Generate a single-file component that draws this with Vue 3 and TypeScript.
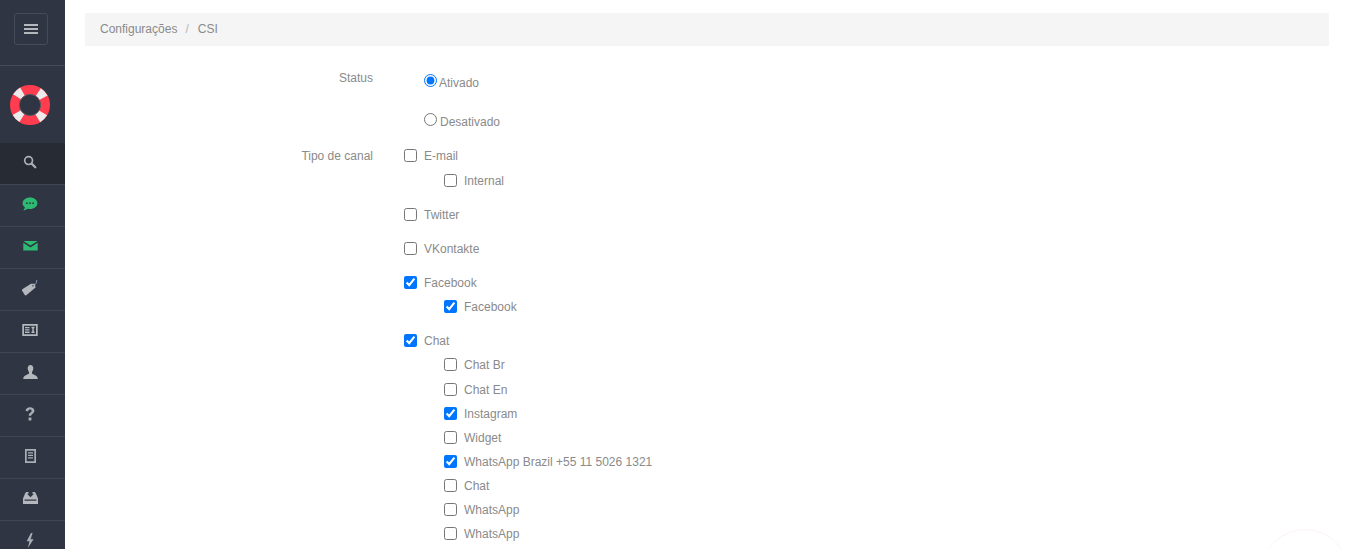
<script setup lang="ts">
interface Row { label: string; checked?: boolean; children?: { label: string; checked?: boolean }[] }
const rows: Row[] = [
  { label: 'E-mail', children: [{ label: 'Internal' }] },
  { label: 'Twitter' },
  { label: 'VKontakte' },
  { label: 'Facebook', checked: true, children: [{ label: 'Facebook', checked: true }] },
  { label: 'Chat', checked: true, children: [
    { label: 'Chat Br' }, { label: 'Chat En' }, { label: 'Instagram', checked: true }, { label: 'Widget' },
    { label: 'WhatsApp Brazil +55 11 5026 1321', checked: true }, { label: 'Chat' }, { label: 'WhatsApp' }, { label: 'WhatsApp' },
  ] },
]
</script>

<template>
  <div class="page">
    <aside class="side">
      <div class="top">
        <button class="toggle" type="button"><span></span><span></span><span></span></button>
      </div>
      <div class="logo">
        <svg width="40" height="40" viewBox="0 0 40 40">
          <circle cx="20" cy="20" r="15.3" fill="none" stroke="#ff3d4f" stroke-width="9.4" />
          <circle cx="20" cy="20" r="15.3" fill="none" stroke="#eceaea" stroke-width="9.4" stroke-dasharray="7.5 16.53" stroke-dashoffset="-8.27" />
          <circle cx="20" cy="20" r="10.6" fill="none" stroke="#5a5560" stroke-width="1" />
        </svg>
      </div>
      <nav class="nav">
        <a class="item active">
          <svg width="14" height="14" viewBox="0 0 14 14"><circle cx="5.6" cy="5.6" r="3.9" fill="none" stroke="#a9b0b8" stroke-width="1.7"/><path d="M8.6 8.6 L12.3 12.3" stroke="#a9b0b8" stroke-width="2.2" stroke-linecap="round"/></svg>
        </a>
        <a class="item">
          <svg width="16" height="14" viewBox="0 0 16 14"><path d="M8 .5C3.8.5.6 3 .6 6.200c0 1.700.9 3.100 2.300 4.100-.2 1.300-1 2.300-1.700 3 1.900 0 3.400-.7 4.400-1.500.7.1 1.500.2 2.400.2 4.200 0 7.400-2.600 7.400-5.800S12.200.5 8 .5z" fill="#2dbb73"/><g fill="#2f3542"><circle cx="4.900" cy="6.200" r=".9"/><circle cx="8" cy="6.200" r=".9"/><circle cx="11.100" cy="6.200" r=".9"/></g></svg>
        </a>
        <a class="item">
          <svg width="15" height="10" viewBox="0 0 15 10"><path d="M.3 0h14.400L7.500 4.600z" fill="#2dbb73"/><path d="M.3 1.800 L7.500 6.400 14.700 1.800V9.500H.3z" fill="#2dbb73"/></svg>
        </a>
        <a class="item">
          <svg width="16" height="16" viewBox="0 0 16 16"><path d="M.3 9.200 9 3.700h4l.5 3.900-9.200 7.700c-.5.300-1.200.2-1.500-.3L.1 10.700c-.2-.5-.1-1.100.2-1.500z" fill="#b4b8bd"/><circle cx="11" cy="5.800" r=".8" fill="#2f3542"/><path d="M11.300 5.400c2.200-.6 3.500-2.400 3.500-5.400" fill="none" stroke="#8aa0b8" stroke-width=".9"/></svg>
        </a>
        <a class="item">
          <svg width="16" height="12" viewBox="0 0 16 12"><path fill-rule="evenodd" d="M.3 0h15.400v12H.3zM2 1.700v8.600h12V1.700z" fill="#b4b8bd"/><path d="M3 3h4.500v1.300H3zM3 5.300h4.500v1.300H3zM3 7.600h4.500v1.300H3zM9.500 2.800h3v1.500h-.7v3.300h.8v1.400H9.500V7.600h.8V4.300h-.8z" fill="#b4b8bd"/></svg>
        </a>
        <a class="item">
          <svg width="15" height="14" viewBox="0 0 15 14"><path d="M7.500 0C5.700 0 4.700 1.400 4.700 3.300c0 1.400.6 2.800 1.300 3.600v1.600C5 9.700.5 10.300.2 13.500V14h14.600v-.5c-.3-3.200-4.800-3.800-5.800-5V6.900c.7-.8 1.300-2.200 1.300-3.600C10.300 1.400 9.300 0 7.500 0z" fill="#b4b8bd"/></svg>
        </a>
        <a class="item">
          <svg width="10" height="14" viewBox="0 0 10 14"><path d="M.6 4C.8 1.600 2.600.3 5 .3c2.500 0 4.400 1.300 4.400 3.500 0 1.500-.8 2.200-1.800 2.900-1 .7-1.300 1-1.300 2H3.700c0-1.500.5-2.200 1.500-2.900.8-.6 1.400-1 1.400-1.800 0-.9-.7-1.400-1.600-1.400-1 0-1.700.6-1.800 1.700zM3.600 10.500h2.800v2.900H3.600z" fill="#a9aeb4"/></svg>
        </a>
        <a class="item">
          <svg width="11" height="14" viewBox="0 0 11 14"><path fill-rule="evenodd" d="M0 0h11v14H0zM1.700 1.700v10.600h7.600V1.700z" fill="#a9aeb4"/><path d="M3 3.300h5v1.300H3zM3 5.800h5v1.300H3zM3 8.300h5v1.300H3z" fill="#a9aeb4"/></svg>
        </a>
        <a class="item">
          <svg width="15" height="12" viewBox="0 0 15 12"><path d="M4 0h7c1 0 1.500.6 1.900 1.500L15 6.500V12H0V6.500l2.100-5C2.500.6 3 0 4 0z" fill="#b4b8bd"/><path d="M5.500 0h4v1.800H11L7.500 5.300 4 1.800h1.500zM1.500 7.600h12v1.200h-12z" fill="#2f3542"/></svg>
        </a>
        <a class="item">
          <svg class="bolt" width="8" height="15" viewBox="0 0 8 15"><path d="M5 0 .6 8.300h2.900L1.800 15 7.600 6.300H4.600L6.600 0z" fill="#a9aeb4"/></svg>
        </a>
      </nav>
    </aside>

    <main class="main">
      <div class="crumb"><span>Configurações</span><i>/</i><span class="csi">CSI</span></div>
      <form class="form">
        <div class="field status">
          <div class="label">Status</div>
          <div class="radios">
            <label class="radio on"><input type="radio" name="st" checked />Ativado</label>
            <label class="radio off"><input type="radio" name="st" />Desativado</label>
          </div>
        </div>
        <div class="field channels">
          <div class="label channel">Tipo de canal</div>
          <div class="groups">
            <div v-for="r in rows" :key="r.label" class="group">
              <label class="check"><input type="checkbox" :checked="r.checked" />{{ r.label }}</label>
              <div v-if="r.children" class="subs">
                <label v-for="(c, i) in r.children" :key="i" class="check"><input type="checkbox" :checked="c.checked" />{{ c.label }}</label>
              </div>
            </div>
          </div>
        </div>
      </form>
    </main>
    <div class="bubble"></div>
  </div>
</template>

<style>
html, body { margin: 0; height: 549px; overflow: hidden; background: #fff; }
</style>

<style scoped>
.page { position: relative; display: flex; height: 549px; overflow: hidden; font-family: "Liberation Sans", Arial, sans-serif; font-size: 12px; color: #8a8a8a; }
.side { width: 65px; flex: none; background: #2f3542; }
.top { height: 65px; padding-right: 4px; box-sizing: content-box; width: 61px; display: flex; align-items: flex-start; justify-content: center; border-bottom: 1px solid #454b57; }
.toggle { width: 34px; height: 32px; margin-top: 13px; padding: 0; display: flex; flex-direction: column; align-items: center; justify-content: center; gap: 2px; background: transparent; border: 1px solid #454b57; border-radius: 3px; }
.toggle span { width: 14px; height: 2px; background: #b4b8bd; }
.logo { height: 77px; padding-right: 5px; display: flex; align-items: center; justify-content: center; }
.nav { display: flex; flex-direction: column; }
.item { flex: none; height: 42px; box-sizing: border-box; padding: 0 5px 4px 0; border-bottom: 1px solid #3f4551; display: flex; align-items: center; justify-content: center; }
.item.active { background: #272b34; }
.bolt { margin-top: 2px; }
.main { flex: 1; min-width: 0; padding: 13px 16px 0 20px; }
.crumb { height: 33px; box-sizing: border-box; padding: 0 15px 2px; display: flex; align-items: center; gap: 8px; background: #f5f5f5; color: #8a8a8a; }
.crumb i { font-style: normal; color: #b5b5b5; }
.csi { margin-left: 1px; }
.form { display: flex; flex-direction: column; }
.field { display: flex; }
.label { width: 288px; flex: none; text-align: right; line-height: 14px; }
.status { padding-top: 24px; }
.status .label { padding-top: 1px; }
.channels { margin-top: 7px; }
.channel { padding-top: 5px; }
.radios { margin-left: 51px; display: flex; flex-direction: column; }
.radio { display: block; line-height: 14px; box-sizing: border-box; padding-top: 6px; }
.radio input { margin: 0 2px 0 0; width: 13px; height: 13px; position: relative; top: -3px; vertical-align: middle; }
.radio.on { height: 39px; }
.radio.off { height: 28px; }
.radio.off input { margin-right: 3px; }
.groups { margin-left: 31px; display: flex; flex-direction: column; gap: 10px; }
.subs { margin-left: 40px; display: flex; flex-direction: column; }
.group:first-child .subs { margin-top: 1px; }
.group:last-child .subs .check:nth-child(2) { margin-top: 1px; }
.check { display: flex; align-items: flex-start; height: 24px; line-height: 24px; }
.check input { margin: 5px 7px 0 0; width: 13px; height: 13px; }
.bubble { position: absolute; left: 1261px; top: 529px; width: 88px; height: 88px; box-sizing: border-box; border: 1px solid #fdf4f4; border-radius: 50%; }
</style>
